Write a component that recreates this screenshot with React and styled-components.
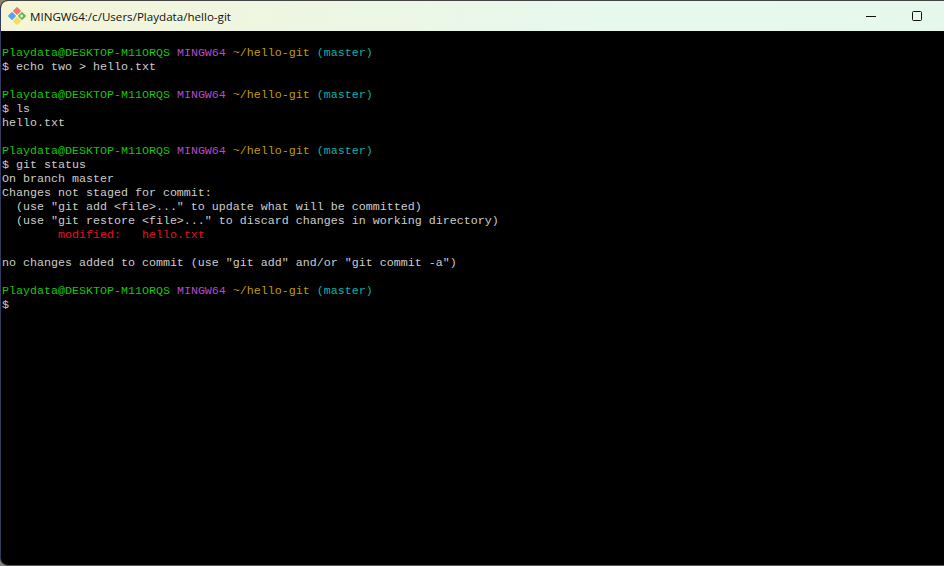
import React from 'react';
import styled, { createGlobalStyle } from 'styled-components';

const GlobalStyle = createGlobalStyle`
  html, body {
    margin: 0;
    padding: 0;
    background: #8a8468;
    overflow: hidden;
  }
`;

const Window = styled.div`
  width: 944px;
  height: 566px;
  box-sizing: border-box;
  border-top: 1px solid #454545;
  border-left: 1px solid #343a5c;
  border-bottom: 1px solid #5a5a5a;
  border-radius: 8px 0 0 8px;
  overflow: hidden;
  background: #000;
  display: flex;
  flex-direction: column;
`;

const TitleBar = styled.div`
  height: 30px;
  flex: none;
  display: flex;
  align-items: center;
  padding-left: 7px;
  background: linear-gradient(90deg, #f5f5d6 0%, #eef6e2 30%, #e8f8ec 60%, #e6f8ec 100%);
`;

const Title = styled.div`
  font-family: 'Open Sans', 'Liberation Sans', sans-serif;
  font-size: 11.6px;
  color: #111;
  margin-left: 4px;
  flex: 1;
`;

const WinButton = styled.div`
  width: 46px;
  height: 30px;
  display: flex;
  align-items: center;
  justify-content: center;
`;

const Spacer = styled.div`
  width: 4px;
`;

const Terminal = styled.pre`
  margin: 0;
  padding: 15px 0 0 1px;
  font-family: 'Liberation Mono', monospace;
  font-size: 11.67px;
  line-height: 14px;
  color: #cccccc;
  flex: 1;
`;

const Span = styled.span`
  color: ${props => props.color};
`;

const Prompt = () => (
  <>
    <Span color="#16c60c">Playdata@DESKTOP-M11ORQS</Span>{' '}
    <Span color="#b24bd0">MINGW64</Span>{' '}
    <Span color="#c19c00">~/hello-git</Span>{' '}
    <Span color="#0cb0a8">(master)</Span>
    {'\n'}
  </>
);

const GitLogo = () => (
  <svg width="18" height="18" viewBox="0 0 18 18">
    <rect x="6" y="1" width="6" height="6" rx="1" transform="rotate(45 9 4)" fill="#f0786c" />
    <rect x="1" y="6" width="6" height="6" rx="1" transform="rotate(45 4 9)" fill="#5aa2ec" />
    <rect x="11" y="6" width="6" height="6" rx="1" transform="rotate(45 14 9)" fill="#62b84e" />
    <rect x="6" y="11" width="6" height="6" rx="1" transform="rotate(45 9 14)" fill="#f6dc66" />
    <circle cx="13.6" cy="9" r="1.4" fill="#eaf6e2" />
  </svg>
);

export default function App() {
  return (
    <>
      <GlobalStyle />
      <Window>
        <TitleBar>
          <GitLogo />
          <Title>MINGW64:/c/Users/Playdata/hello-git</Title>
          <WinButton>
            <svg width="10" height="10" viewBox="0 0 10 10">
              <path d="M0 5.5H10" stroke="#111" strokeWidth="1" />
            </svg>
          </WinButton>
          <WinButton>
            <svg width="10" height="10" viewBox="0 0 10 10">
              <rect x="0.5" y="0.5" width="9" height="9" rx="1" fill="none" stroke="#111" strokeWidth="1" />
            </svg>
          </WinButton>
          <Spacer />
        </TitleBar>
        <Terminal>
          <Prompt />
          {'$ echo two > hello.txt\n\n'}
          <Prompt />
          {'$ ls\nhello.txt\n\n'}
          <Prompt />
          {'$ git status\nOn branch master\nChanges not staged for commit:\n'}
          {'  (use "git add <file>..." to update what will be committed)\n'}
          {'  (use "git restore <file>..." to discard changes in working directory)\n'}
          {'        '}
          <Span color="#e81123">{'modified:   hello.txt'}</Span>
          {'\n\nno changes added to commit (use "git add" and/or "git commit -a")\n\n'}
          <Prompt />
          {'$'}
        </Terminal>
      </Window>
    </>
  );
}
